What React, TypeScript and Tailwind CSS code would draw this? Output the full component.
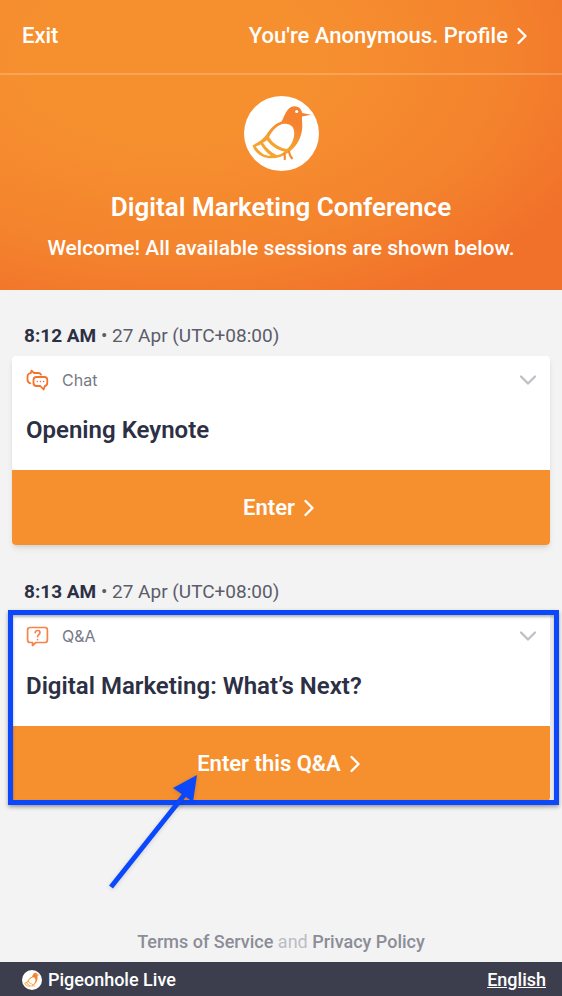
import { ChevronDown, ChevronRight } from "lucide-react";

type Session = {
  id: string;
  time: string;
  date: string;
  kind: "chat" | "qa";
  label: string;
  title: string;
  action: string;
  highlighted?: boolean;
};

const sessions: Session[] = [
  {
    id: "keynote",
    time: "8:12 AM",
    date: "27 Apr (UTC+08:00)",
    kind: "chat",
    label: "Chat",
    title: "Opening Keynote",
    action: "Enter",
  },
  {
    id: "marketing",
    time: "8:13 AM",
    date: "27 Apr (UTC+08:00)",
    kind: "qa",
    label: "Q&A",
    title: "Digital Marketing: What’s Next?",
    action: "Enter this Q&A",
    highlighted: true,
  },
];

const PigeonLogo = ({ className }: { className: string }) => (
  <svg viewBox="0 0 75 75" className={className} aria-hidden="true">
    <defs>
      <linearGradient id="pigeon" x1="0.8" y1="0" x2="0.3" y2="1">
        <stop offset="0.3" stopColor="#f5822f" />
        <stop offset="0.75" stopColor="#f6a431" />
      </linearGradient>
    </defs>
    <circle cx="37.5" cy="37.5" r="37.5" fill="#fff" />
    <path
      fill="url(#pigeon)"
      d="M37.5 25.5C39.5 22 41 17 44 13.5C47 10 51 9.5 54 11C56.5 12.2 57.7 14.5 58.2 17L67 18.7L58 20.5C57.7 25 58.8 29 58 34C57 42 53 49 48 53.5L44.5 56.5C37 62.5 26 64 18 60.3C13 57.7 10 54 8.5 49.2C14 46.5 19 43.5 22.5 38.5C26.5 32.5 31 27.5 37.5 25.5Z"
    />
    <path d="M40 57Q41.5 60 40.7 64M45 55Q45.5 60 48.5 63" fill="none" stroke="#f5872f" strokeWidth="2" />
    <circle cx="52.7" cy="15.5" r="1.6" fill="#fff" />
    {/* wing */}
    <path
      fill="#fff"
      d="M25 41C28 35 33.5 28.3 40 27.7C46.5 27.2 50 31 50.2 36.5C50.4 43 47.5 49 43 53C36 52 29 48 25 41Z"
    />
    {/* tail feathers */}
    <path fill="#fff" d="M23 44.3C27 50 33.5 54.5 40.5 55.5C38 58 36 58.8 32.5 59C27 56.5 22 52 19 46.8Z" />
    <path fill="#fff" d="M16.8 48.4C19.5 53 23 57 27 59.6C24.5 60 21.5 59.3 19.5 58.2C15.5 55.5 13.5 53 11.8 50.5Z" />
  </svg>
);

const ChatIcon = () => (
  <svg viewBox="0 0 24 24" className="size-6" fill="none" stroke="#f5722c" strokeWidth="1.8" strokeLinecap="round" strokeLinejoin="round" aria-hidden="true">
    <path d="M4.3 15.3C2.3 14.7 1.5 13.5 1.5 11.5V9C1.5 6.5 2.7 5.3 4.8 5.1L5.5 2.7L8.1 5H12C13.5 5 14.5 5.6 15 6.6" />
    <path d="M10.500 9H18.500C20.500 9 21.300 10 21.300 12V14.500C21.300 16.800 20.500 17.800 18.800 18L17.600 21.500L14.300 18H10.500C8.500 18 7.500 17 7.500 15V12C7.500 10 8.500 9 10.500 9Z" />
    <path strokeWidth="1.4" d="M11.2 13.5H11.3M14.4 13.5H14.5M17.6 13.5H17.7" />
  </svg>
);

const QuestionIcon = () => (
  <svg viewBox="0 0 24 24" className="size-6" fill="none" stroke="#f5834a" strokeWidth="1.7" strokeLinecap="round" strokeLinejoin="round" aria-hidden="true">
    <path d="M4 3.5H19Q21.4 3.5 21.4 6V16Q21.4 18.5 19 18.5H10L6.500 21.5V18.5H4Q1.6 18.5 1.6 16V6Q1.6 3.5 4 3.5Z" />
    <path d="M9.2 8.7C9.3 7.2 10.4 6.5 11.6 6.5C13 6.5 14 7.3 14 8.6C14 10.6 11.6 10.7 11.6 12.6M11.6 15.5V15.6" />
  </svg>
);

// Blue frame and arrow that point at the session to join
const Callout = () => (
  <div className="pointer-events-none absolute -top-0.5 -right-[9px] -bottom-1 -left-1 border-5 border-[#0b48fb] shadow-[0_2px_4px_rgba(0,0,0,0.35),inset_0_2px_3px_rgba(0,0,0,0.3)]">
    <div className="absolute top-40 left-24">
      <svg viewBox="0 0 96 120" className="h-[120px] w-24 drop-shadow-sm" aria-hidden="true">
        <path d="M2 112L76 19" stroke="#0b48fb" strokeWidth="5" />
        <path d="M88 0L64 13L84 27Z" fill="#0b48fb" />
      </svg>
    </div>
  </div>
);

const SessionCard = ({ session }: { session: Session }) => (
  <section aria-labelledby={session.id}>
    <p className="px-3 text-[19px] leading-6 text-[#5b5d6b]">
      <strong className="font-bold text-[#2d3044]">{session.time}</strong> • {session.date}
    </p>
    <div className="relative mt-2">
      <div className="overflow-hidden rounded-sm bg-white shadow-md">
        <div className="px-3.5 pt-3 pb-6">
          <div className="flex h-6 items-center gap-3">
            {session.kind === "chat" ? <ChatIcon /> : <QuestionIcon />}
            <span className="grow font-['Inter',sans-serif] text-base text-[#777986]">{session.label}</span>
            <button type="button" aria-label="Show details" className="-mr-1.5 text-[#bfc0c5]">
              <ChevronDown className="size-7" strokeWidth={2} />
            </button>
          </div>
          <h2 id={session.id} className="mt-[22px] text-2xl leading-8 font-semibold text-[#2d3044]">
            {session.title}
          </h2>
        </div>
        <button type="button" className="flex h-[75px] w-full items-center justify-center bg-[#f6902f] text-[22px] font-semibold text-white">
          {session.action}
          <ChevronRight className="-mr-1 size-7" strokeWidth={2} />
        </button>
      </div>
      {session.highlighted && <Callout />}
    </div>
  </section>
);

const App = () => {
  return (
    <div className="flex min-h-screen flex-col bg-[#f3f3f3] font-['Roboto',sans-serif]">
      <header className="bg-[radial-gradient(ellipse_at_30%_20%,#f6902f_25%,#f4832d_60%,#f1702a_85%)] text-white">
        <nav className="flex h-[75px] items-center justify-between border-b-2 border-white/20 px-[22px] pb-0.5 text-[22px] font-medium">
          <a href="#exit">Exit</a>
          <a href="#profile" className="mr-1 flex items-center">
            You're Anonymous. Profile
            <ChevronRight className="size-7" strokeWidth={2} />
          </a>
        </nav>
        <div className="flex flex-col items-center px-4 pt-[21px] pb-[30px] text-center">
          <PigeonLogo className="size-[75px]" />
          <h1 className="mt-5 text-[26px] leading-8 font-semibold">Digital Marketing Conference</h1>
          <p className="mt-[13px] text-[21px] leading-6 font-medium">Welcome! All available sessions are shown below.</p>
        </div>
      </header>

      <main className="flex grow flex-col gap-[35px] px-3 pt-[34px]">
        {sessions.map((s) => (
          <SessionCard key={s.id} session={s} />
        ))}
      </main>

      <p className="pt-10 pb-2 text-center text-lg leading-6 text-[#bcbdc4]">
        <a href="#terms" className="font-medium text-[#8b8d97]">Terms of Service</a> and{" "}
        <a href="#privacy" className="font-medium text-[#8b8d97]">Privacy Policy</a>
      </p>
      <footer className="flex h-[34px] items-center justify-between bg-[#3c3e4d] px-4 pt-0.5 text-lg font-medium text-white">
        <a href="#home" className="flex items-center gap-1.5 pl-1.5">
          <PigeonLogo className="size-5" />
          Pigeonhole Live
        </a>
        <a href="#language" className="underline">English</a>
      </footer>
    </div>
  );
};

export default App;
